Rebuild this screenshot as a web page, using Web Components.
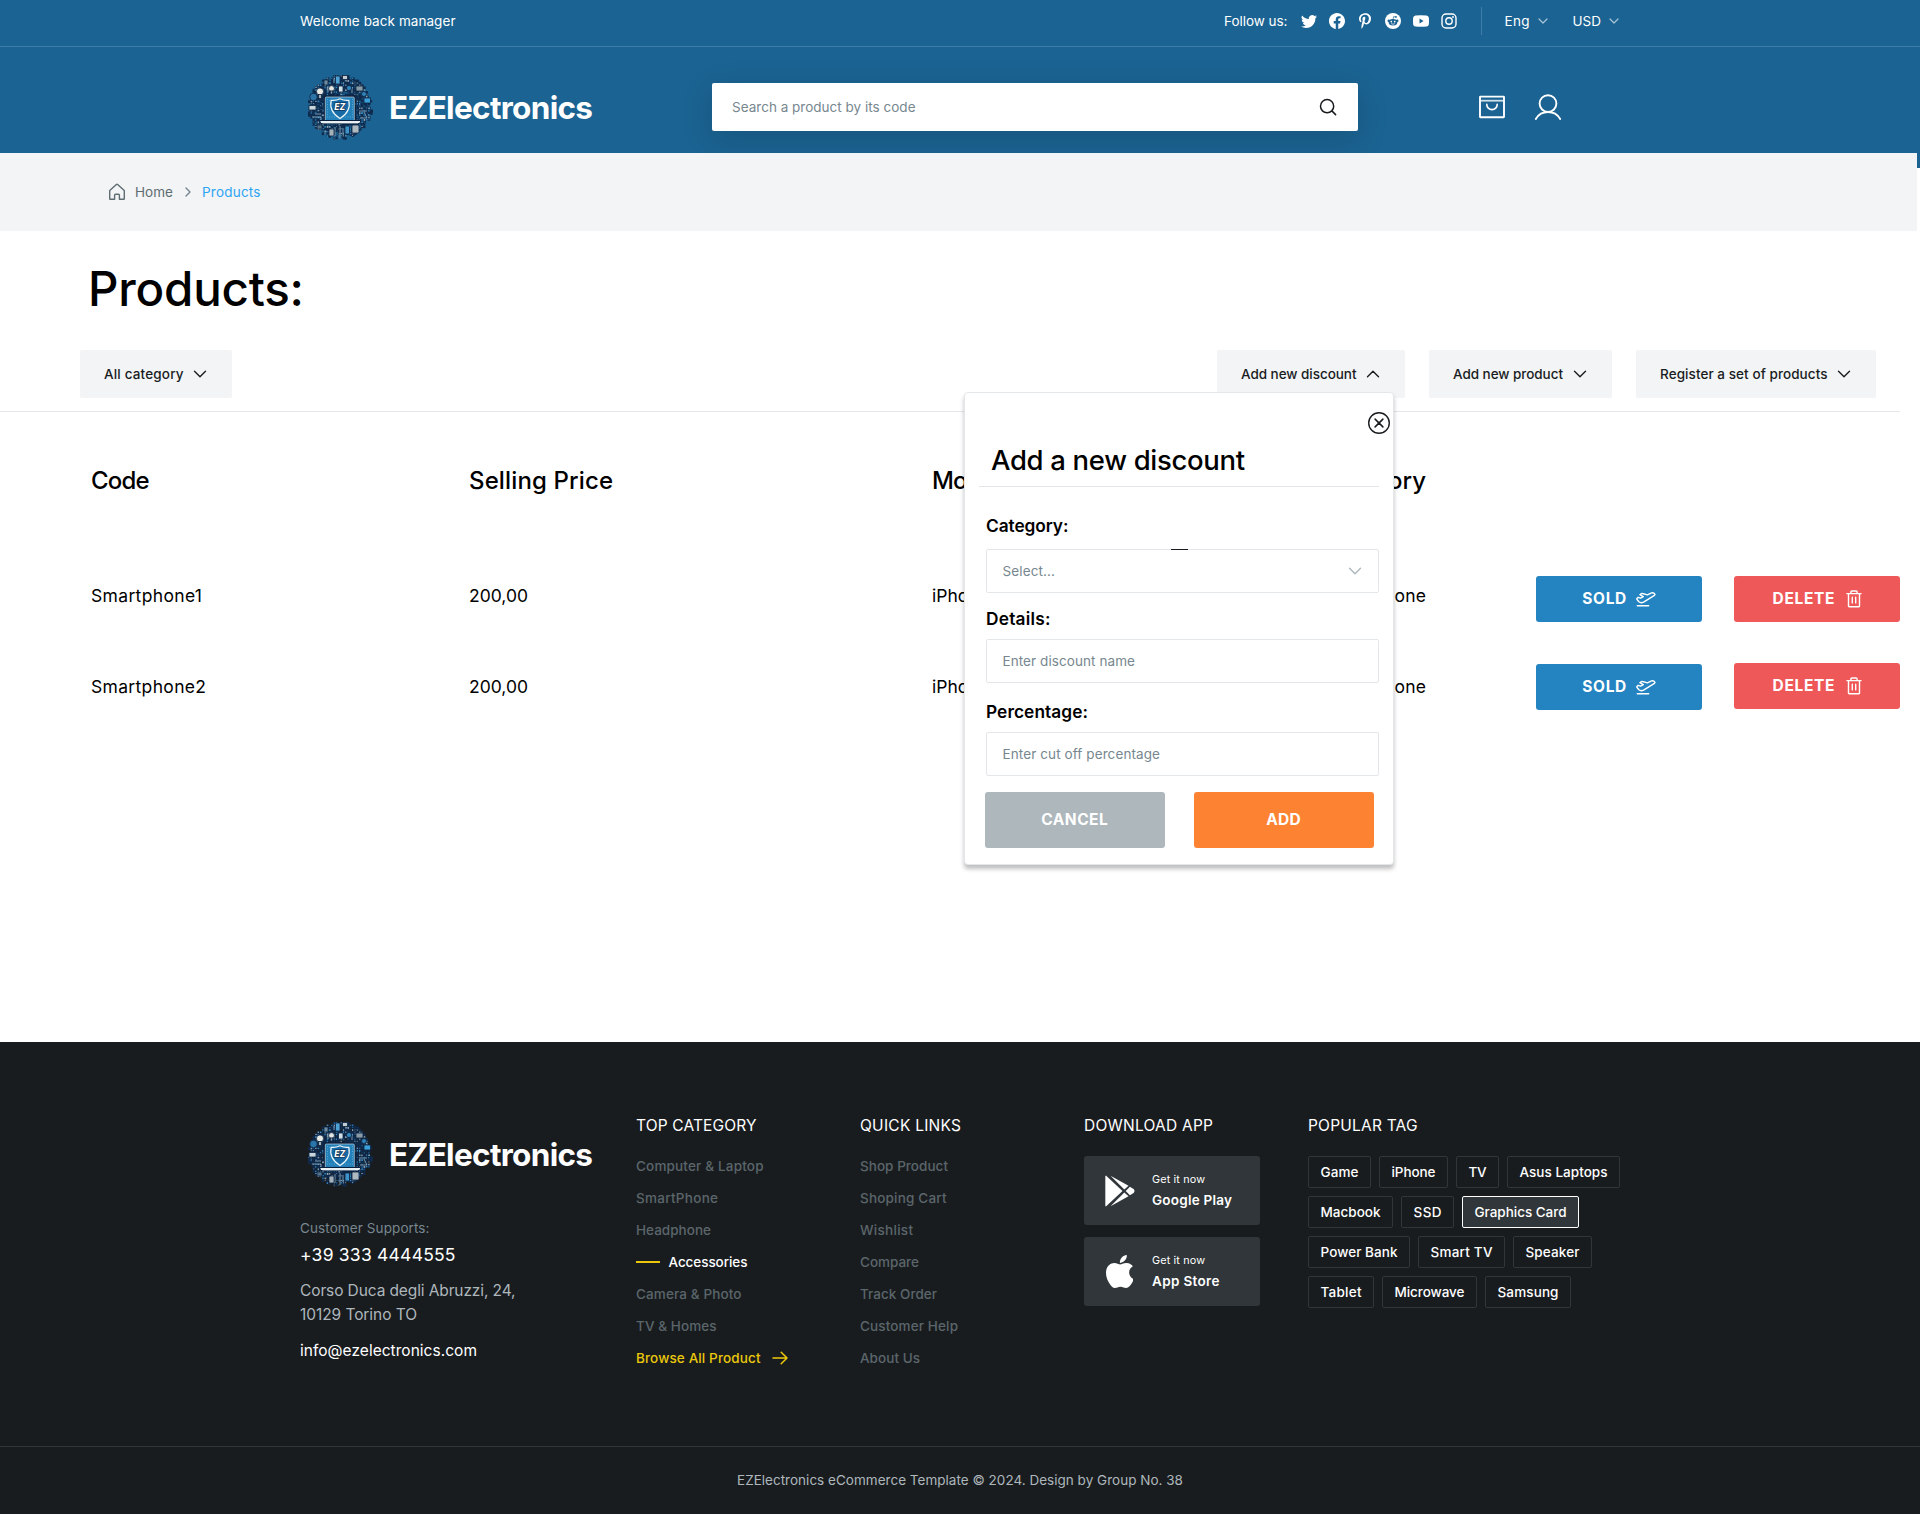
<!DOCTYPE html>
<html lang="en">
<head>
<meta charset="utf-8">
<title>EZElectronics – Products</title>
<style>
  body { margin: 0; background: #fff; font-family: Inter, "Liberation Sans", sans-serif; color: #000; }
</style>
</head>
<body>
<ez-page></ez-page>
<script>
const define = (name, html, ready) => {
  const tpl = document.createElement('template');
  tpl.innerHTML = html;
  customElements.define(name, class extends HTMLElement {
    connectedCallback() {
      if (this.shadowRoot) return;
      const root = this.attachShadow({ mode: 'open' });
      root.append(tpl.content.cloneNode(true));
      if (ready) ready(this, root);
    }
  });
};

/* A single line of text: size, weight and the width its tracking spreads it to. */
define('ez-text', `
  <style>:host{display:block;white-space:nowrap;flex:none} span{display:inline-block;line-height:inherit;vertical-align:top}</style>
  <span><slot></slot></span>`, (el, root) => {
  const size = el.getAttribute('size'), weight = el.getAttribute('weight'), w = +el.getAttribute('w');
  if (size) el.style.fontSize = size + 'px';
  if (weight) el.style.fontWeight = weight;
  if (el.getAttribute('lh')) el.style.lineHeight = el.getAttribute('lh') + 'px';
  if (w) {
    const nat = root.querySelector('span').getBoundingClientRect().width;
    el.style.letterSpacing = ((w - nat) / Math.max(1, el.textContent.length - 1)).toFixed(3) + 'px';
    el.style.width = w + 'px';
  }
});

/* Icon set: [width, height, viewBox, markup] */
const S = (w, d) => `<path fill="none" stroke="currentColor" stroke-width="${w}" stroke-linecap="round" stroke-linejoin="round" d="${d}"/>`;
const ICONS = {
  twitter: [16, 16, '0 0 16 16', '<path fill="currentColor" d="M5.026 15c6.038 0 9.341-5.003 9.341-9.334 0-.14 0-.282-.006-.422A6.685 6.685 0 0 0 16 3.542a6.658 6.658 0 0 1-1.889.518 3.301 3.301 0 0 0 1.447-1.817 6.533 6.533 0 0 1-2.087.793A3.286 3.286 0 0 0 7.875 6.03a9.325 9.325 0 0 1-6.767-3.429 3.289 3.289 0 0 0 1.018 4.382A3.323 3.323 0 0 1 .64 6.575v.045a3.288 3.288 0 0 0 2.632 3.218 3.203 3.203 0 0 1-.865.115 3.23 3.23 0 0 1-.614-.057 3.283 3.283 0 0 0 3.067 2.277A6.588 6.588 0 0 1 .78 13.58a6.32 6.32 0 0 1-.78-.045A9.344 9.344 0 0 0 5.026 15z"/>'],
  facebook: [16, 16, '0 0 16 16', '<path fill="currentColor" d="M16 8.049c0-4.446-3.582-8.05-8-8.05C3.58 0-.002 3.603-.002 8.05c0 4.017 2.926 7.347 6.75 7.951v-5.625h-2.03V8.05H6.75V6.275c0-2.017 1.195-3.131 3.022-3.131.876 0 1.791.157 1.791.157v1.98h-1.009c-.993 0-1.303.621-1.303 1.258v1.51h2.218l-.354 2.326H9.25V16c3.824-.604 6.75-3.934 6.75-7.951z"/>'],
  pinterest: [16, 16, '-64 0 512 512', '<path fill="currentColor" d="M204 6.5C101.400 6.500 0 74.900 0 185.600 0 256 39.600 296 63.600 296c9.900 0 15.600-27.600 15.600-35.400 0-9.300-23.700-29.100-23.700-67.800 0-80.400 61.200-137.400 140.400-137.400 68.100 0 118.500 38.700 118.500 109.800 0 53.100-21.300 152.700-90.300 152.700-24.900 0-46.200-18-46.200-43.800 0-37.800 26.400-74.400 26.400-113.400 0-66.200-93.900-54.200-93.900 25.800 0 16.800 2.100 35.400 9.600 50.700-13.800 59.400-42 147.900-42 209.100 0 18.900 2.700 37.500 4.500 56.400 3.400 3.800 1.700 3.400 6.900 1.500 50.400-69 48.600-82.500 71.400-172.800 12.300 23.400 44.100 36 69.300 36 106.200 0 153.900-103.500 153.900-196.800C384 71.300 298.200 6.500 204 6.500z"/>'],
  reddit: [16, 16, '0 0 16 16', '<circle cx="8" cy="8" r="8" fill="currentColor"/><g fill="#1B6392"><ellipse cx="8" cy="9.300" rx="4.300" ry="3.200"/><circle cx="3.700" cy="7.700" r="1.200"/><circle cx="12.300" cy="7.700" r="1.200"/><circle cx="11" cy="3.900" r=".9"/></g><path d="M8 6.500l.6-2.900 2.300.4" fill="none" stroke="#1B6392" stroke-width=".7"/><g fill="#fff"><circle cx="6.300" cy="8.600" r=".85"/><circle cx="9.700" cy="8.600" r=".85"/></g><path d="M6.200 10.600q1.800 1.300 3.600 0" fill="none" stroke="#fff" stroke-width=".7"/>'],
  youtube: [16, 16, '0 0 16 16', '<path fill="currentColor" fill-rule="evenodd" d="M2.500 2.500Q8 1.900 13.500 2.500 15.500 2.800 15.800 4.600 16.200 8 15.800 11.400 15.500 13.200 13.500 13.500 8 14.100 2.500 13.500.5 13.200.2 11.400-.2 8 .2 4.600.5 2.800 2.500 2.500zM6.500 5.500v5L10.600 8z"/>'],
  instagram: [16, 16, '0 0 16 16', '<rect x="1" y="1" width="14" height="14" rx="4" fill="none" stroke="currentColor" stroke-width="1.400"/><circle cx="8" cy="8" r="3.200" fill="none" stroke="currentColor" stroke-width="1.400"/><circle cx="12" cy="4" r=".95" fill="currentColor"/>'],
  down10: [10, 6, '0 0 10 6', S(1.2, 'M1 1l4 4 4-4')],
  down: [14, 8, '0 0 14 8', S(1.4, 'M1.500 1.200L7 6.700l5.500-5.500')],
  up: [14, 8, '0 0 14 8', S(1.4, 'M1.500 6.800L7 1.300l5.500 5.500')],
  search: [18, 18, '0 0 18 18', S(1.5, 'M8.100 1.600a6.600 6.600 0 1 0 0 13.200a6.600 6.600 0 0 0 0-13.200M12.900 12.900L16.600 16.600')],
  bag: [28, 24, '0 0 28 24', '<rect x="2" y="1.600" width="24" height="20.600" rx=".4" fill="none" stroke="currentColor" stroke-width="1.900"/><path d="M2 5.700h24" fill="none" stroke="currentColor" stroke-width="1.800" opacity=".8"/>' + S(1.7, 'M8.800 9.400a5.200 5.200 0 0 0 10.400 0')],
  user: [28, 28, '0 0 28 28', S(1.9, 'M14 2.200a8.400 8.400 0 1 0 0 16.800a8.400 8.400 0 0 0 0-16.800M1.800 26a14.200 14.200 0 0 1 24.400 0')],
  home: [18, 18, '0 0 18 18', S(1.4, 'M6.600 16.300H2.300a.6.600 0 0 1-.6-.6V8a1 1 0 0 1 .3-.7L8.400 1.500a.9.900 0 0 1 1.200 0L16 7.300a1 1 0 0 1 .3.700v7.700a.6.600 0 0 1-.6.600H11.400M6.600 16.300V12.200a1 1 0 0 1 1-1h2.800a1 1 0 0 1 1 1v4.100')],
  right: [6, 10, '0 0 6 10', S(1.4, 'M1 1l4 4-4 4')],
  close: [24, 24, '0 0 24 24', '<circle cx="12" cy="12" r="10.300" fill="none" stroke="currentColor" stroke-width="1.400"/>' + S(1.5, 'M8.100 8.100l7.800 7.800M15.900 8.100l-7.800 7.800')],
  plane: [20, 15, '0 0 20 15', S(1.4, 'M1.300 13.800H12.700M.9 7.300Q.6 6.700 1.100 6.300L2.200 5.400 4.600 6.200 7.300 4.700 3.900 2.700 5.400 1.600Q5.900 1.300 6.500 1.500L11.400 2.900 15.600.9Q17.700.3 18.800 2.100 19.200 2.800 18.400 3.300L8 9.900Q5 11.500 2.900 9.800z')],
  trash: [16, 18, '0 0 16 18', S(1.4, 'M.9 3.600H15.100M2.500 3.600V16.100a.6.600 0 0 0 .6.600H12.900a.6.600 0 0 0 .6-.6V3.600M4.900 3.400V2a1 1 0 0 1 1-1H10.100a1 1 0 0 1 1 1V3.400M6.300 7.300V12.900M9.700 7.300V12.900')],
  arrow: [16, 14, '0 0 16 14', S(1.5, 'M1 7H15M9.200 1.200L15 7 9.200 12.800')],
  play: [30, 32, '0 0 30 32', '<g fill="currentColor"><path d="M.9.500Q.3.800.3 1.800V30.200Q.3 31.200.9 31.500L17.500 16z"/><path d="M5.500.700L23.500 10.700 19.300 14.600z"/><path d="M5.500 31.300L23.500 21.300 19.300 17.400z"/><path d="M24.900 11.700L28.600 14Q30.400 16 28.600 18L24.900 20.300 20.700 16z"/></g>'],
  apple: [27, 33, '4 32 366.500 448', '<path fill="currentColor" d="M318.700 268.700c-.2-36.700 16.400-64.400 50-84.800-18.800-26.900-47.200-41.700-84.700-44.600-35.500-2.800-74.300 20.700-88.500 20.700-15 0-49.400-19.700-76.400-19.700C63.300 141.200 4 184.800 4 273.500q0 39.300 14.400 81.200c12.800 36.700 59 126.700 107.200 125.200 25.200-.6 43-17.900 75.800-17.900 31.800 0 48.300 17.900 76.400 17.900 48.600-.7 90.400-82.500 102.600-119.300-65.200-30.700-61.700-90-61.700-91.900zm-56.600-164.200c27.300-32.400 24.800-61.900 24-72.500-24.100 1.400-52 16.400-67.900 34.900-17.500 19.800-27.800 44.300-25.600 71.900 26.100 2 49.900-11.400 69.500-34.300z"/>']
};
define('ez-icon', `<style>:host{display:block;flex:none} svg{display:block}</style><div></div>`, (el, root) => {
  const [w, h, vb, body] = ICONS[el.getAttribute('name')];
  root.querySelector('div').innerHTML = `<svg width="${w}" height="${h}" viewBox="${vb}">${body}</svg>`;
});

/* Round emblem: a ring of small gadgets and circuit traces behind a laptop with a shield. */
define('ez-logo', `
  <style>
    :host{display:flex;align-items:center;gap:16px;height:66px;padding-left:7px;color:#fff}
    svg{display:block;flex:none}
    ez-text{margin-top:2px}
  </style>
  <svg width="66" height="66" viewBox="0 0 66 66">
    <g id="ring"></g>
    <g fill="none" stroke="#8fb2c8" stroke-width=".8">
      <path d="M8 40h6M5 43h9v4M52 37h8M53 44h7l-3-6M21 18v-6M27 9V5M45 19v-6M33 52v12M28 53v9M36 54v7"/>
    </g>
    <g stroke="#0c2342" stroke-width=".8">
      <circle cx="13" cy="17.500" r="3.600" fill="#e6e9e4"/><rect x="11.500" y="20.500" width="3" height="4" fill="#9fb1bc"/>
      <circle cx="24.500" cy="14.500" r="2.900" fill="#e2e6e2"/><rect x="23.300" y="17" width="2.400" height="3" fill="#93a6b3"/>
      <circle cx="6.500" cy="23" r="3.800" fill="#2a74a8"/>
      <rect x="28.500" y="2" width="4.500" height="8" rx="1" fill="#4ea3d4"/>
      <rect x="35.500" y="1.500" width="5" height="4" fill="#c3cbd0"/>
      <rect x="31.500" y="12" width="4.500" height="6" fill="#cfe0e8"/>
      <circle cx="42" cy="14" r="2.600" fill="#2f83b8"/>
      <rect x="49" y="12" width="7" height="5" fill="#8a9ba8"/>
      <rect x="17" y="6" width="4" height="5" fill="#6f8ba0"/>
      <circle cx="57" cy="20" r="2.500" fill="#2f83b8"/>
      <rect x="57" y="24" width="6.500" height="5" fill="#3ba0da"/>
      <rect x="2" y="31.500" width="7" height="4.500" fill="#c9d6dd"/>
      <rect x="10" y="51" width="5" height="4" fill="#54728a"/>
      <rect x="22" y="55" width="5" height="7" rx="1" fill="#a5b1ba"/>
      <rect x="38" y="52" width="4.500" height="8" rx="1" fill="#3c94c8"/>
      <rect x="45" y="51" width="7" height="8" rx="1" fill="#aeb9c0"/>
    </g>
    <rect x="16.800" y="21.500" width="32" height="27" rx="2" fill="#0a1f3d"/>
    <rect x="18.300" y="23" width="29" height="24" rx="1" fill="#2380b8" stroke="#c2d3dd" stroke-width=".7"/>
    <path d="M20.500 25v19M45.500 25v19M22 26.500h5M39 26.500h5M22 43h6M38 43h6" stroke="#6bb2da" stroke-width=".8" stroke-dasharray="1 1.500"/>
    <path d="M33 24.800q4 2 8.800 1.500q2.500 11-8.800 18.200q-11.300-7.200-8.800-18.200q4.800.5 8.800-1.500z" fill="#176aa5" stroke="#eef6fa" stroke-width="1.200"/>
    <text x="32.800" y="36" text-anchor="middle" font-family="Inter,sans-serif" font-weight="800" font-style="italic" font-size="8.500" fill="#fff" stroke="#0a1f3d" stroke-width="1.200" paint-order="stroke">EZ</text>
    <path d="M13 46.500h40.500v1.600q-1 1.800-3 1.800h-34.500q-2.500 0-3-1.800z" fill="#e9f0f3" stroke="#0a1f3d" stroke-width="1"/>
  </svg>
  <ez-text size="31.500" weight="700" w="204" lh="38">EZElectronics</ez-text>`, (el, root) => {
  let seed = 38;
  const rnd = () => (seed = (seed * 16807) % 2147483647) / 2147483647;
  const light = ['#7f9db0', '#2c7fb5', '#4a6379', '#9db0bd', '#1f5f92', '#3b93c9'];
  let out = '';
  for (let y = 1; y < 65; y += 2.3) for (let x = 1; x < 65; x += 2.3) {
    const r = Math.hypot(x + 1.2 - 33, y + 1.2 - 33);
    if (r > 32 || (r > 30 && rnd() < .3)) continue;
    const w = (1.8 + rnd() * 1.4).toFixed(1), h = (1.8 + rnd() * 1.4).toFixed(1);
    if (rnd() < .9) out += `<rect x="${x.toFixed(1)}" y="${y.toFixed(1)}" width="${w}" height="${h}" fill="#0f2a4c"/>`;
    if (rnd() < .5) out += `<rect x="${(x + .4).toFixed(1)}" y="${(y + .4).toFixed(1)}" width="${(.8 + rnd()).toFixed(1)}" height="${(.8 + rnd() * 1.2).toFixed(1)}" fill="${light[rnd() * 6 | 0]}"/>`;
  }
  root.getElementById('ring').innerHTML = out;
});

define('ez-header', `
  <style>
    :host{display:block;height:168px;background:#1B6392;color:#fff}
    .top{height:46px;border-bottom:1px solid #3f7da6;display:flex;justify-content:space-between;padding:0 301px 0 300px;align-items:flex-start}
    .top>div{display:flex;align-items:center;height:42px}
    .soc{display:flex;gap:12px;margin:0 24px 0 13px}
    .sep{width:1px;height:28px;background:#3f7da6;margin-right:23px}
    .chev{color:#a8c4d6;margin:0 0 0 8px}
    .usd{margin-left:25px}
    .bar{display:flex;align-items:center;height:120px;padding-left:300px}
    .search{display:flex;align-items:center;justify-content:space-between;box-sizing:border-box;width:646px;height:48px;margin-left:119px;padding:0 21px 0 20px;background:#fff;border-radius:2px;box-shadow:0 8px 32px rgba(0,0,0,.14);color:#77878F}
    .search ez-icon{color:#191C1F}
    .act{display:flex;align-items:center;gap:28px;margin-left:120px}
  </style>
  <div class="top">
    <div><ez-text size="13.500" w="155.500" lh="20">Welcome back manager</ez-text></div>
    <div>
      <ez-text size="13.500" w="63.500" lh="20">Follow us:</ez-text>
      <span class="soc"><ez-icon name="twitter"></ez-icon><ez-icon name="facebook"></ez-icon><ez-icon name="pinterest"></ez-icon><ez-icon name="reddit"></ez-icon><ez-icon name="youtube"></ez-icon><ez-icon name="instagram"></ez-icon></span>
      <span class="sep"></span>
      <ez-text size="13.500" w="25" lh="20">Eng</ez-text><ez-icon class="chev" name="down10"></ez-icon>
      <ez-text class="usd" size="13.500" w="28.500" lh="20">USD</ez-text><ez-icon class="chev" name="down10"></ez-icon>
    </div>
  </div>
  <div class="bar">
    <ez-logo></ez-logo>
    <div class="search"><ez-text size="13.500" w="183.500" lh="20">Search a product by its code</ez-text><ez-icon name="search"></ez-icon></div>
    <div class="act"><ez-icon name="bag"></ez-icon><ez-icon name="user"></ez-icon></div>
  </div>`);

define('ez-breadcrumb', `
  <style>
    :host{display:flex;align-items:center;box-sizing:border-box;width:1917px;height:78px;margin-top:-15px;padding-left:108px;background:#F2F4F5;color:#5F6C72}
    ez-text:first-of-type{margin:0 11.500px 0 9px} ez-icon[name=right]{margin-right:11.500px;color:#77878F} .here{color:#2DA5F3}
  </style>
  <ez-icon name="home"></ez-icon><ez-text size="13.500" w="38" lh="20">Home</ez-text>
  <ez-icon name="right"></ez-icon><ez-text class="here" style="margin:0" size="13.500" w="58.500" lh="20">Products</ez-text>`);

const DROP = icon => `
  <style>:host{display:flex;align-items:center;justify-content:space-between;box-sizing:border-box;height:48px;padding:0 25px 0 24px;background:#F2F4F5;border-radius:2px;color:#191C1F}</style>
  <slot></slot><ez-icon name="${icon}"></ez-icon>`;
define('ez-dropdown', DROP('down'));
define('ez-dropdown-open', DROP('up'));

define('ez-button', `
  <style>:host{display:flex;align-items:center;justify-content:center;gap:var(--g,9.500px);border-radius:3px;color:#fff;background:var(--bg)}</style><slot></slot>`);

define('ez-field', `
  <style>
    :host{display:block}
    .box{display:flex;align-items:center;justify-content:space-between;box-sizing:border-box;height:44px;padding:0 16px 0 15.500px;border:1px solid #E4E7E9;border-radius:2px;background:#fff;color:#77878F}
    .label{display:flex;align-items:center;height:24px;padding-bottom:var(--gap)}
  </style>
  <div class="label"><slot name="label"></slot></div>
  <div class="box"><slot></slot></div>`);

define('ez-modal', `
  <style>
    :host{display:block;box-sizing:border-box;width:430px;height:473px;background:#fff;border:1px solid #E4E7E9;border-radius:4px;box-shadow:0 4px 4px rgba(0,0,0,.25)}
    .close{display:flex;justify-content:flex-end;padding:18px 2px 0 0;color:#191C1F}
    .title{margin:5px 0 0 26px}
    hr{height:1px;margin:6px 14px 0;border:0;background:#E4E7E9}
    ez-field{width:393px;margin-left:21px}
    .f1{position:relative;margin-top:27px;--gap:11px}
    .mark{position:absolute;left:184.500px;top:34.500px;width:17px;height:1.500px;background:#191C1F}
    .f2{margin-top:14px;--gap:8px}
    .f3{margin-top:17px;--gap:8px}
    .btns{display:flex;gap:29px;margin:16px 0 0 19.500px}
    ez-button{width:180px;height:56px}
  </style>
  <div class="close"><ez-icon name="close"></ez-icon></div>
  <ez-text class="title" size="27.500" weight="500" w="254" lh="40">Add a new discount</ez-text>
  <hr>
  <ez-field class="f1"><ez-text slot="label" size="17.300" weight="600" w="82.500" lh="24">Category:</ez-text><ez-text size="13.500" w="52.500" lh="20">Select...</ez-text><ez-icon name="down" style="color:#ADB7BC"></ez-icon><i slot="label" class="mark"></i></ez-field>
  <ez-field class="f2"><ez-text slot="label" size="17.300" weight="600" w="64.500" lh="24">Details:</ez-text><ez-text size="13.500" w="132.500" lh="20">Enter discount name</ez-text></ez-field>
  <ez-field class="f3"><ez-text slot="label" size="17.300" weight="600" w="102" lh="24">Percentage:</ez-text><ez-text size="13.500" w="157.500" lh="20">Enter cut off percentage</ez-text></ez-field>
  <div class="btns">
    <ez-button style="--bg:#ADB7BC"><ez-text size="15.500" weight="700" w="66.500" lh="24">CANCEL</ez-text></ez-button>
    <ez-button style="--bg:#FD8333"><ez-text size="15.500" weight="700" w="34.500" lh="24">ADD</ez-text></ez-button>
  </div>`);

define('ez-products', `
  <style>
    :host{display:block;position:relative;box-sizing:border-box;height:811px;padding-top:28px}
    h1{margin:0 0 0 88px;height:60px}
    .tools{display:flex;gap:24px;margin-top:31px;padding:0 44px 0 80px}
    .tools :first-child{margin-right:auto}
    hr{width:1900px;height:1px;margin:13px 0 0;border:0;background:#E4E7E9}
    .row{display:grid;grid-template-columns:378px 463px 494px 110px 166px 32px 166px;padding-left:91px;align-items:center}
    .row>:nth-child(4){justify-self:end;grid-column:3;grid-row:1}
    .row>:nth-child(1){grid-column:1}.row>:nth-child(2){grid-column:2}.row>:nth-child(3){grid-column:3;grid-row:1}
    .row>:nth-child(5){grid-column:5}.row>:nth-child(6){grid-column:7}
    .head{height:30px;margin-top:54px}
    .r1{height:46px;margin-top:80px}.r1>ez-text{margin-bottom:7px}
    .r2{height:47px;margin-top:41px}
    ez-button{height:46px}.r2 ez-button:nth-child(5){align-self:end}.r2 ez-button:nth-child(6){align-self:start}
    .del{--g:11px}
    ez-modal{position:absolute;left:964px;top:161px}
  </style>
  <h1><ez-text size="47.500" weight="550" w="216" lh="60">Products:</ez-text></h1>
  <div class="tools">
    <ez-dropdown style="width:152px"><ez-text size="13.500" weight="500" w="79.500" lh="20">All category</ez-text></ez-dropdown>
    <ez-dropdown-open style="width:188px"><ez-text size="13.500" weight="500" w="115.500" lh="20">Add new discount</ez-text></ez-dropdown-open>
    <ez-dropdown style="width:183px"><ez-text size="13.500" weight="500" w="110" lh="20">Add new product</ez-text></ez-dropdown>
    <ez-dropdown style="width:240px"><ez-text size="13.500" weight="500" w="167.500" lh="20">Register a set of products</ez-text></ez-dropdown>
  </div>
  <hr>
  <div class="row head"><ez-text size="24" weight="550" w="58.500" lh="30">Code</ez-text><ez-text size="24" weight="550" w="144" lh="30">Selling Price</ez-text><ez-text size="24" weight="550" w="68" lh="30">Model</ez-text><ez-text size="24" weight="550" w="106" lh="30">Category</ez-text></div>
  <div class="row r1"><ez-text size="17.500" w="111" lh="24">Smartphone1</ez-text><ez-text size="17.500" w="59" lh="24">200,00</ez-text><ez-text size="17.500" w="57" lh="24">iPhone</ez-text><ez-text size="17.500" w="103" lh="24">Smartphone</ez-text>
    <ez-button style="--bg:#2484C2"><ez-text size="15.500" weight="700" w="44" lh="24">SOLD</ez-text><ez-icon name="plane"></ez-icon></ez-button>
    <ez-button class="del" style="--bg:#EE5858"><ez-text size="15.500" weight="700" w="62" lh="24">DELETE</ez-text><ez-icon name="trash"></ez-icon></ez-button></div>
  <div class="row r2"><ez-text size="17.500" w="115" lh="24">Smartphone2</ez-text><ez-text size="17.500" w="59" lh="24">200,00</ez-text><ez-text size="17.500" w="57" lh="24">iPhone</ez-text><ez-text size="17.500" w="103" lh="24">Smartphone</ez-text>
    <ez-button style="--bg:#2484C2"><ez-text size="15.500" weight="700" w="44" lh="24">SOLD</ez-text><ez-icon name="plane"></ez-icon></ez-button>
    <ez-button class="del" style="--bg:#EE5858"><ez-text size="15.500" weight="700" w="62" lh="24">DELETE</ez-text><ez-icon name="trash"></ez-icon></ez-button></div>
  <ez-modal></ez-modal>`);

define('ez-store', `
  <style>
    :host{display:flex;align-items:center;box-sizing:border-box;width:176px;height:69px;padding-left:21px;background:#303639;border-radius:3px}
    .i{width:47px;display:flex}
  </style>
  <div class="i"><slot name="icon"></slot></div><div><slot></slot></div>`);

define('ez-tag', `
  <style>:host{display:flex;align-items:center;justify-content:center;box-sizing:border-box;height:32px;border:1px solid #303639;border-radius:2px;color:#fff}
  :host([active]){background:#303639;border-color:#fff}</style><slot></slot>`);

const links = list => list.map(([t, w, c]) => c === 'on'
  ? `<li class="on"><i></i><ez-text size="13.500" weight="500" w="${w}" lh="32">${t}</ez-text></li>`
  : c === 'all' ? `<li class="all"><ez-text size="13.500" weight="500" w="${w}" lh="32">${t}</ez-text><ez-icon name="arrow"></ez-icon></li>`
  : `<li><ez-text size="13.500" weight="500" w="${w}" lh="32">${t}</ez-text></li>`).join('');
const tags = rows => rows.map(r => '<div class="tags">' + r.map(([t, w, a]) =>
  `<ez-tag style="width:${w}px" ${a ? 'active' : ''}><ez-text size="13.500" weight="500" w="${w - 25}" lh="20">${t}</ez-text></ez-tag>`).join('') + '</div>').join('');

define('ez-footer', `
  <style>
    :host{display:block;height:472px;background:#191C1F;color:#fff}
    .cols{display:grid;grid-template-columns:336px 224px 224px 224px 1fr;box-sizing:border-box;height:404px;padding:72px 0 0 300px}
    ez-logo{margin:7px 0 31px}
    .info{color:#ADB7BC}
    ul{list-style:none;margin:12px 0 0;padding:0;color:#5B666B}
    li{display:flex;align-items:center;height:32px}
    .on{color:#fff} .on i{width:24px;height:2px;margin-right:8.500px;background:#EBC80C}
    .all{color:#EBC80C} .all ez-icon{margin-left:11px}
    .stores{display:grid;gap:12px;margin-top:18px}
    .tagbox{display:grid;gap:8px;margin-top:18px}
    .tags{display:flex;gap:8px}
    .copy{display:flex;align-items:center;justify-content:center;height:66px;border-top:1px solid #303639;color:#ADB7BC}
  </style>
  <div class="cols">
    <div>
      <ez-logo></ez-logo>
      <ez-text style="color:#77878F" size="13.500" w="129.500" lh="20">Customer Supports:</ez-text>
      <ez-text style="margin-top:4.500px" size="17.500" w="155.500" lh="24">+39 333 4444555</ez-text>
      <div class="info" style="margin:12px 0"><ez-text size="15.500" w="215.500" lh="24">Corso Duca degli Abruzzi, 24,</ez-text><ez-text size="15.500" w="117" lh="24">10129 Torino TO</ez-text></div>
      <ez-text size="15.500" w="177" lh="24">info@ezelectronics.com</ez-text>
    </div>
    <div><ez-text size="15.500" w="120.500" lh="24">TOP CATEGORY</ez-text>
      <ul>${links([['Computer &amp; Laptop', 127.5], ['SmartPhone', 82], ['Headphone', 75], ['Accessories', 79, 'on'], ['Camera &amp; Photo', 105.5], ['TV &amp; Homes', 80.5], ['Browse All Product', 124.5, 'all']])}</ul></div>
    <div><ez-text size="15.500" w="101" lh="24">QUICK LINKS</ez-text>
      <ul>${links([['Shop Product', 88], ['Shoping Cart', 86.5], ['Wishlist', 53], ['Compare', 59], ['Track Order', 77], ['Customer Help', 98], ['About Us', 60]])}</ul></div>
    <div><ez-text size="15.500" w="129" lh="24">DOWNLOAD APP</ez-text>
      <div class="stores">
        <ez-store><ez-icon slot="icon" name="play"></ez-icon><ez-text size="10.800" w="53" lh="18">Get it now</ez-text><ez-text size="13.500" weight="600" w="80" lh="22">Google Play</ez-text></ez-store>
        <ez-store><ez-icon slot="icon" name="apple" style="margin-left:1px"></ez-icon><ez-text size="10.800" w="53" lh="18">Get it now</ez-text><ez-text size="13.500" weight="600" w="67.500" lh="22">App Store</ez-text></ez-store>
      </div></div>
    <div><ez-text size="15.500" w="109.500" lh="24">POPULAR TAG</ez-text>
      <div class="tagbox">${tags([[['Game', 63], ['iPhone', 69], ['TV', 43], ['Asus Laptops', 113]], [['Macbook', 85], ['SSD', 53], ['Graphics Card', 117, 1]], [['Power Bank', 102], ['Smart TV', 87], ['Speaker', 79]], [['Tablet', 66], ['Microwave', 95], ['Samsung', 86]]])}</div></div>
  </div>
  <div class="copy"><ez-text size="13.500" w="446" lh="20">EZElectronics eCommerce Template © 2024. Design by Group No. 38</ez-text></div>`);

define('ez-page', `
  <style>:host{display:block;width:1920px;height:1514px;overflow:hidden} ez-breadcrumb{position:relative}</style>
  <ez-header></ez-header><ez-breadcrumb></ez-breadcrumb><ez-products></ez-products><ez-footer></ez-footer>`);
</script>
</body>
</html>
